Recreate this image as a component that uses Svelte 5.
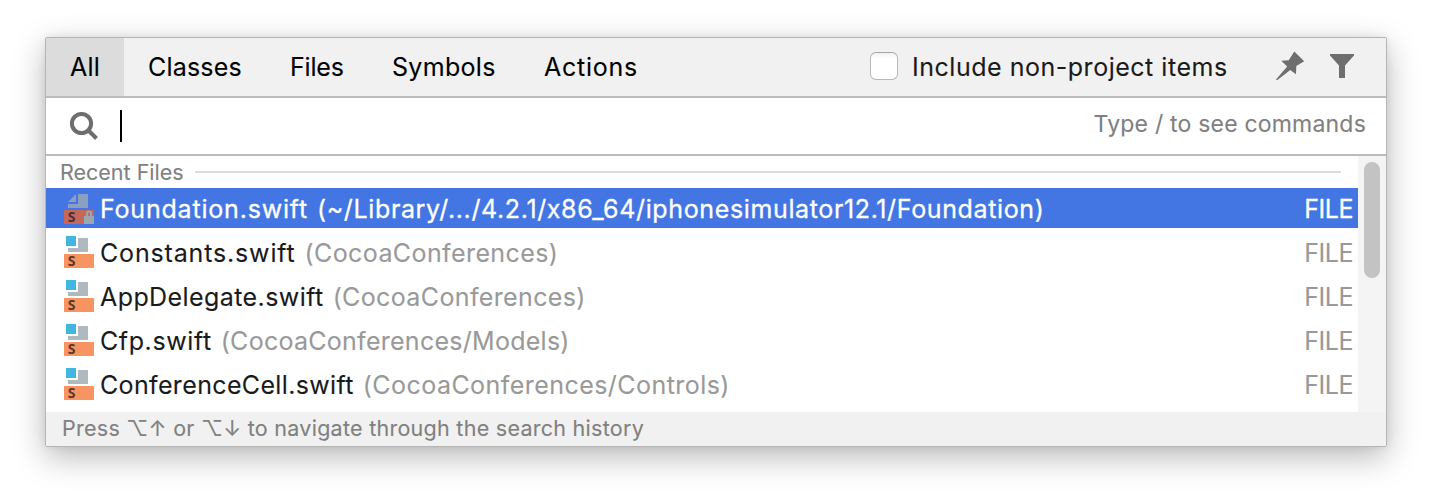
<script>
  const tabs = [
    { label: 'All', width: 78, spacing: 0.2 },
    { label: 'Classes', width: 142, spacing: 0.18 },
    { label: 'Files', width: 102, spacing: -0.2 },
    { label: 'Symbols', width: 152, spacing: 0.3 },
    { label: 'Actions', width: 142, spacing: 0.75 },
  ];
  const files = [
    { name: 'Foundation.swift', path: '(~/Library/.../4.2.1/x86_64/iphonesimulator12.1/Foundation)', spacing: [0.8, 0.63], locked: true },
    { name: 'Constants.swift', path: '(CocoaConferences)', spacing: [0.84, 0.4] },
    { name: 'AppDelegate.swift', path: '(CocoaConferences)', spacing: [0.42, 0.37] },
    { name: 'Cfp.swift', path: '(CocoaConferences/Models)', spacing: [0.6, 0.27] },
    { name: 'ConferenceCell.swift', path: '(CocoaConferences/Controls)', spacing: [0.35, 0.45] },
  ];
</script>

<main>
  <div class="popup">
    <header>
      {#each tabs as tab, i}
        <div class="tab" class:active={i === 0} style="width:{tab.width}px;letter-spacing:{tab.spacing}px">{tab.label}</div>
      {/each}
      <div class="check">
        <span class="box"></span>
        <span class="check-label">Include non-project items</span>
      </div>
      <svg class="pin" width="30" height="32" viewBox="0 0 30 32" fill="#6e6e6e">
        <path d="M19.300 2.500L29.200 12.300L21.300 17L21 25.300L15.300 21L2 31.200L1 30.400L12.200 17.400L6.200 11.700L13.700 11.300Z" />
      </svg>
      <svg class="funnel" width="24" height="24" viewBox="0 0 24 24" fill="#6e6e6e">
        <path d="M0 0H24V1.500L15 11.500V24H9V11.500L0 1.500Z" />
      </svg>
    </header>

    <div class="search">
      <svg width="32" height="32" viewBox="0 0 32 32" fill="none" stroke="#6e6e6e">
        <circle cx="13.500" cy="13.500" r="9.600" stroke-width="4" />
        <path d="M20.500 20.500L28.500 28.500" stroke-width="4" />
      </svg>
      <span class="caret"></span>
      <span class="hint">Type / to see commands</span>
    </div>

    <div class="results">
      <div class="list">
        <div class="group"><span>Recent Files</span><i></i></div>
        {#each files as file, i}
          <div class="row" class:selected={i === 0}>
            <svg width="32" height="32" viewBox="0 0 32 32">
              {#if file.locked}
                <path d="M6 10L14 2V10ZM16 2H26V16H6V12H16Z" fill="#8b9fc0" />
                <path d="M2 18H32V32H2Z" fill="#c5685c" />
              {:else}
                <path d="M4 0H14V10H4Z" fill="#40b6e0" />
                <path d="M16 2H26V16H6V12H16Z" fill="#aeb9c0" />
                <path d="M2 18H32V32H2Z" fill="#f79462" />
              {/if}
              <text x="5.700" y="29.900" class="letter" fill={file.locked ? '#4f2f34' : '#5c392b'}>S</text>
              {#if file.locked}
                <path d="M22 24H32V32H22Z" fill="#9aa7b0" />
                <path d="M25 25V21.500a2 2 0 0 1 4 0V25" fill="none" stroke="#9aa7b0" stroke-width="2" />
              {/if}
            </svg>
            <span class="name" style="letter-spacing:{file.spacing[0]}px">{file.name}</span>
            <span class="path" style="letter-spacing:{file.spacing[1]}px">{file.path}</span>
            <span class="kind">FILE</span>
          </div>
        {/each}
      </div>
      <div class="track"><div class="thumb"></div></div>
    </div>

    <footer>Press ⌥↑ or ⌥↓ to navigate through the search history</footer>
  </div>
</main>

<style>
  :global(body) { margin: 0; background: #fff; }
  main {
    box-sizing: border-box;
    width: 1432px;
    height: 500px;
    padding: 37px 45px;
    overflow: hidden;
    background: #fff;
    font-family: Inter, "Liberation Sans", sans-serif;
    font-size: 25px;
    color: #1a1a1a;
    white-space: nowrap;
    -webkit-text-stroke: .1px;
  }
  .popup {
    box-sizing: border-box;
    width: 1342px;
    height: 410px;
    border: 1px solid #b5b5b5;
    border-radius: 2px;
    background: #fff;
    box-shadow: 0 10px 32px rgba(0, 0, 0, .28), 0 0 8px rgba(0, 0, 0, .07);
  }
  header {
    display: flex;
    align-items: center;
    height: 58px;
    background: #f1f1f1;
    border-bottom: 2px solid #bcbcbc;
  }
  .tab {
    box-sizing: border-box;
    height: 58px;
    line-height: 58px;
    padding-left: 24px;
    color: #000;
  }
  .tab.active { background: #dcdcdc; }
  .check { display: flex; align-items: center; margin-left: auto; }
  .box {
    box-sizing: border-box;
    width: 28px;
    height: 28px;
    margin: 0 14px 2px 0;
    border: 1px solid #b9b9b9;
    border-top-color: #a5a5a5;
    border-radius: 6px;
    background: linear-gradient(#f0f0f0, #fff 5px);
  }
  .check-label { width: 316px; letter-spacing: .52px; }
  .pin { margin: 0 0 4px 47px; }
  .funnel { margin: 0 32px 2px 25px; }
  .search {
    display: flex;
    align-items: center;
    height: 56px;
    padding: 0 20px 0 22px;
    border-bottom: 2px solid #bcbcbc;
  }
  .caret { width: 2px; height: 32px; margin-left: 20px; background: #000; }
  .hint { margin: 0 0 4px auto; color: #808080; font-size: 23px; letter-spacing: .2px; }
  .results { display: flex; height: 256px; }
  .list { flex: 1; display: flex; flex-direction: column; gap: 4px; overflow: hidden; }
  .group {
    display: flex;
    align-items: center;
    gap: 11px;
    height: 32px;
    margin-bottom: -4px;
    padding: 0 17px 0 14px;
    color: #808080;
    font-size: 21.500px;
  }
  .group i { flex: 1; height: 2px; background: #dcdcdc; }
  .row {
    display: flex;
    align-items: center;
    flex: none;
    height: 40px;
    padding: 0 5px 0 16px;
    line-height: 30px;
  }
  .row svg { margin-right: 6px; overflow: visible; }
  .row span { padding-top: 2px; }
  .path { margin-left: 9px; color: #999; }
  .kind { margin-left: auto; color: #999; letter-spacing: -.5px; }
  .selected { background: #4376e2; }
  .selected .name, .selected .path, .selected .kind { color: #fff; -webkit-text-stroke: .3px; }
  .letter { font: 700 14px "Noto Sans", sans-serif; -webkit-text-stroke: 0; }
  .track { width: 28px; padding-top: 6px; box-sizing: border-box; background: #f4f4f4; }
  .thumb { width: 16px; height: 116px; margin-left: 6px; border-radius: 8px; background: #c3c3c3; }
  footer {
    height: 34px;
    line-height: 33px;
    padding-left: 16px;
    background: #f1f1f1;
    color: #808080;
    font-size: 21.500px;
    letter-spacing: .27px;
  }
</style>
